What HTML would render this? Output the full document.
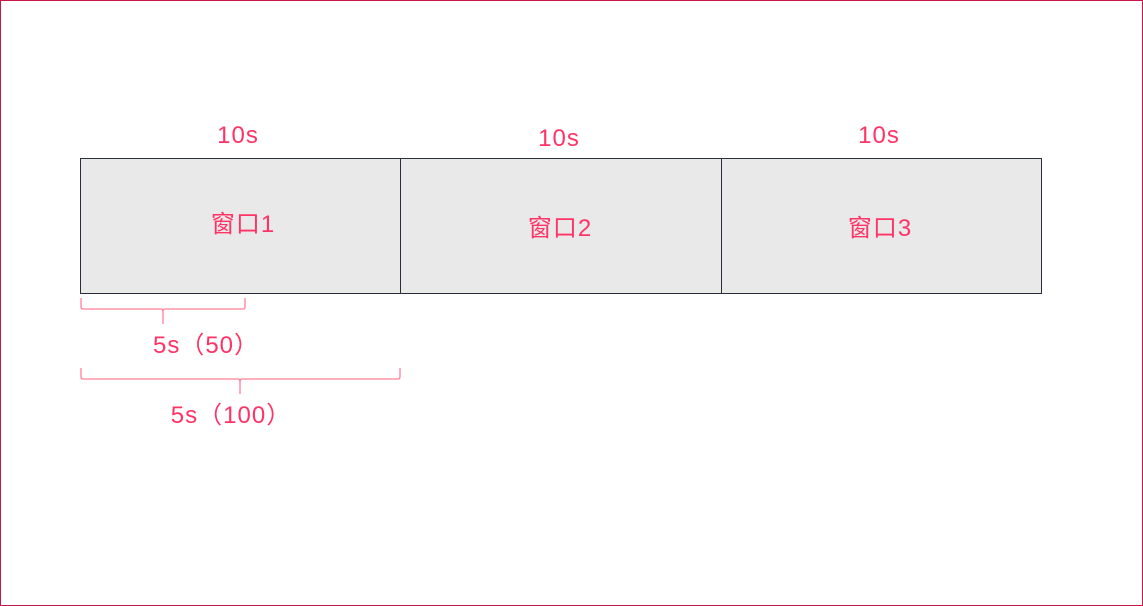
<!DOCTYPE html>
<html><head><meta charset="utf-8"><style>
html,body{margin:0;padding:0;}
body{width:1143px;height:606px;position:relative;background:#fff;overflow:hidden;font-family:"Liberation Sans","Noto Sans CJK SC",sans-serif;}
.frame{position:absolute;left:0;top:0;width:1141px;height:604px;border:1px solid #c8184a;}
.t{position:absolute;color:#ff3366;font-size:24px;line-height:24px;letter-spacing:1px;white-space:nowrap;transform:translateX(-50%);}
.box{position:absolute;top:158px;height:134px;background:#e9e9e9;border:1px solid #2a2d3a;}
</style></head><body>
<div class="frame"></div>
<div class="box" style="left:80px;width:960px;"></div>
<div style="position:absolute;left:400px;top:158px;width:1px;height:135px;background:#2a2d3a"></div>
<div style="position:absolute;left:721px;top:158px;width:1px;height:135px;background:#2a2d3a"></div>
<div class="t" style="left:238px;top:124px">10s</div>
<div class="t" style="left:559px;top:127px">10s</div>
<div class="t" style="left:879px;top:124px">10s</div>
<div class="t" style="left:243px;top:213px">窗口1</div>
<div class="t" style="left:560px;top:217px">窗口2</div>
<div class="t" style="left:880px;top:217px">窗口3</div>
<svg style="position:absolute;left:0;top:0" width="1143" height="606">
<g fill="none" stroke="#ff7f9b" stroke-width="1.3">
<path d="M81 298 V307 Q81 309 83 309 H161 Q163 309 163 312 V324 M163 312 Q163 309 165 309 H243 Q245 309 245 307 V298"/>
<path d="M81 368 V377 Q81 379 83 379 H238 Q240 379 240 382 V394 M240 382 Q240 379 242 379 H398 Q400 379 400 377 V368"/>
</g>
</svg>
<div class="t" style="left:206px;top:334px">5s（50）</div>
<div class="t" style="left:231px;top:404px">5s（100）</div>
</body></html>
